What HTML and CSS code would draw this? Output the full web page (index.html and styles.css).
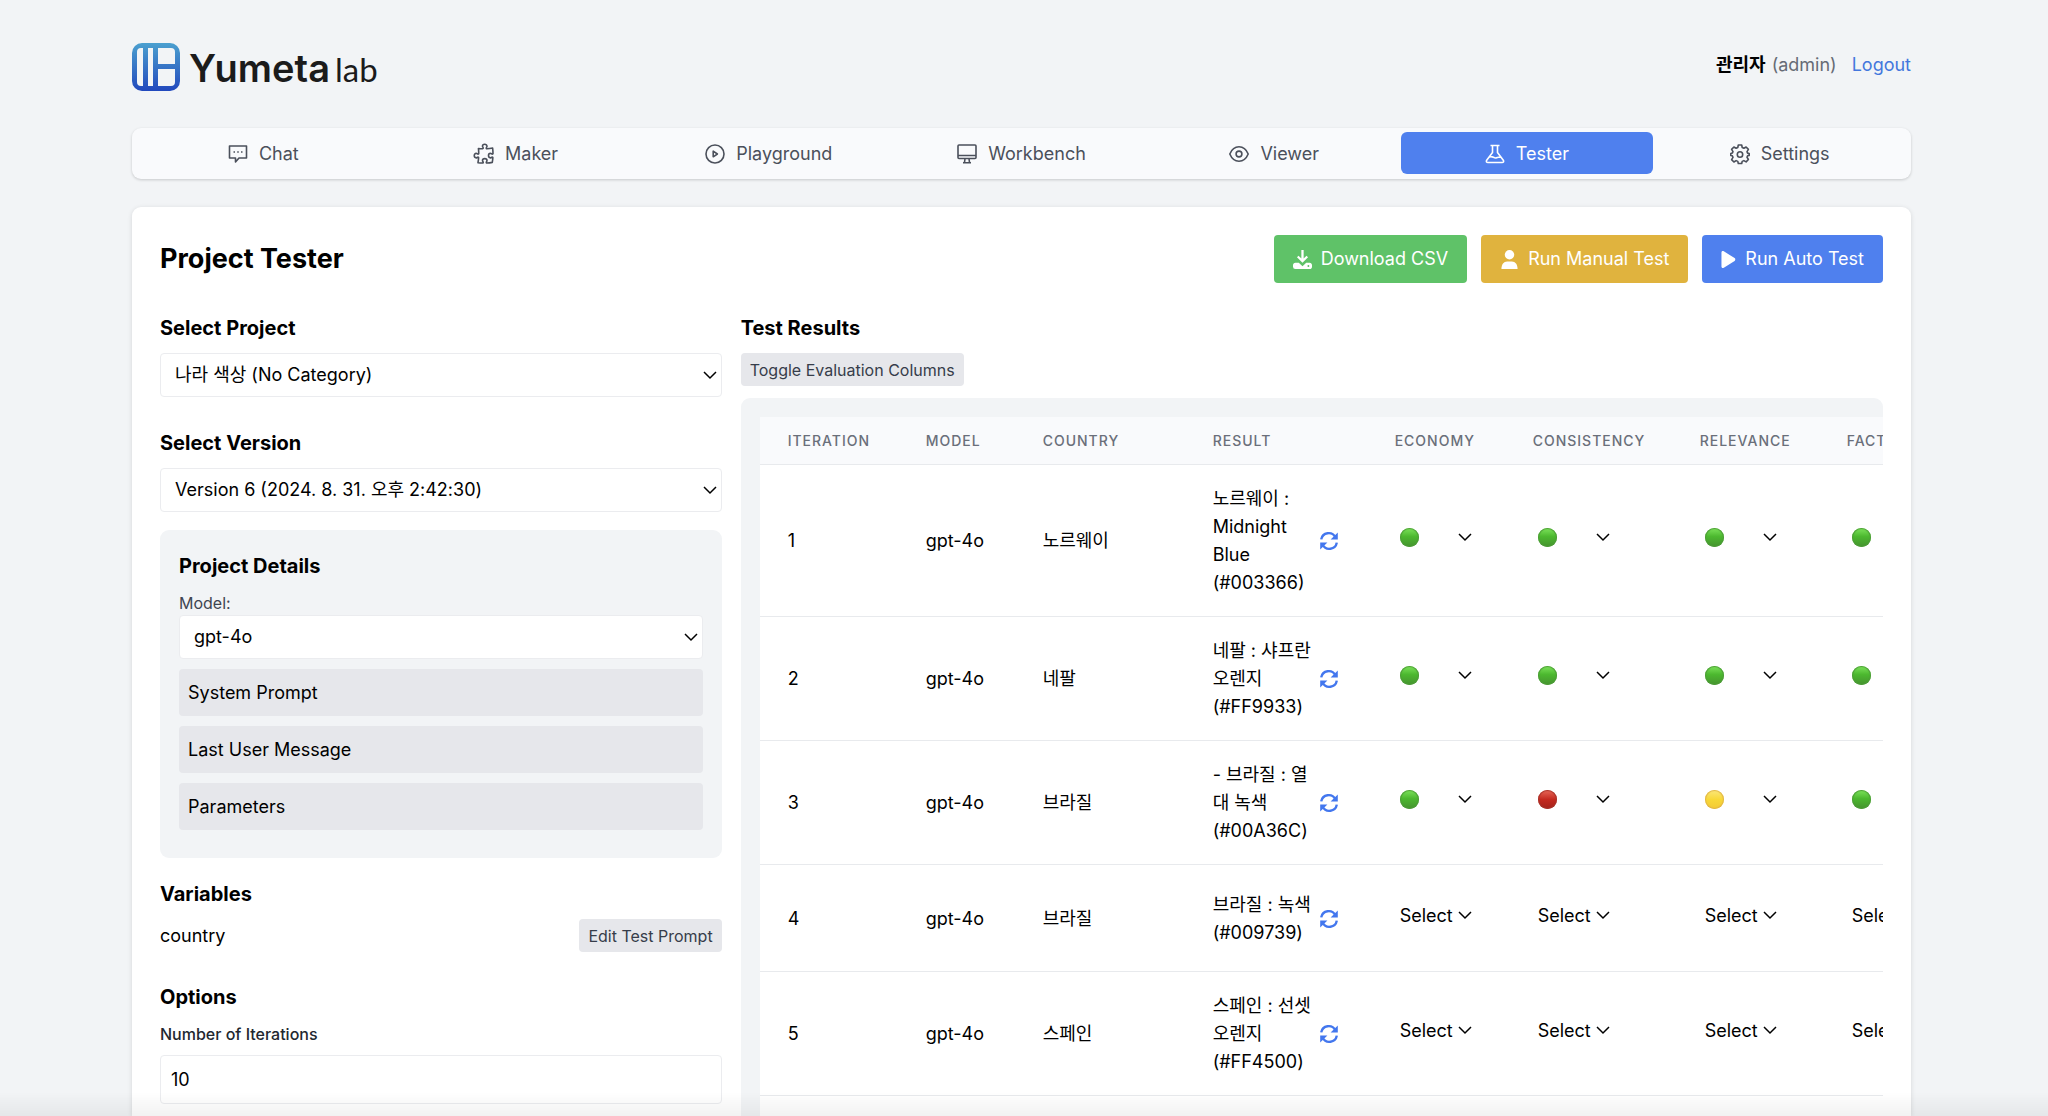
FILE: index.html
```html
<!DOCTYPE html>
<html lang="ko">
<head>
<meta charset="utf-8">
<title>Yumeta lab - Project Tester</title>
<link rel="stylesheet" href="styles.css">
</head>
<body>
<svg class="sprite" aria-hidden="true">
  <symbol id="chevron" viewBox="0 0 14 14"><path d="M1 4l6 6 6-6" fill="none" stroke="currentColor" stroke-width="1.5"/></symbol>
  <symbol id="refresh" viewBox="0 0 20 20"><g fill="none" stroke="currentColor" stroke-width="2.4"><path d="M2.2 8.4A7.6 7.6 0 0 1 16.4 6.2"/><path d="M17.8 11.6A7.6 7.6 0 0 1 3.6 13.8"/></g><path d="M18.8 1.4v7.2h-7.2zM1.2 18.6v-7.2h7.2z" fill="currentColor"/></symbol>
</svg>
<div class="app">
  <header class="header">
    <a class="logo" href="#" aria-label="Yumeta lab">
      <svg class="logo-mark" viewBox="0 0 48 48" aria-hidden="true">
        <defs><linearGradient id="brand" x1="0" y1="0" x2="0" y2="1"><stop offset="0" stop-color="#4ba0cf"/><stop offset="1" stop-color="#2148bd"/></linearGradient></defs>
        <path fill="url(#brand)" fill-rule="evenodd" d="M10 0h28a10 10 0 0 1 10 10v28a10 10 0 0 1-10 10H10A10 10 0 0 1 0 38V10A10 10 0 0 1 10 0zM9 5a4 4 0 0 0-4 4v30a4 4 0 0 0 4 4h2V5zM16 5v38h5V5zM26 5v16h17V9a4 4 0 0 0-4-4zM26 26v17h13a4 4 0 0 0 4-4V26z"/>
      </svg>
      <span class="logo-name">Yumeta</span><span class="logo-suffix">lab</span>
    </a>
    <div class="account"><strong>관리자</strong><span class="role">(admin)</span><a href="#">Logout</a></div>
  </header>

  <nav class="nav">
    <a href="#"><svg viewBox="0 0 20 20"><path d="M1.500 2h17v12H11l-3.500 4V14h-6z"/><path d="M5.500 8h1.500M9.250 8h1.500M13 8h1.500"/></svg>Chat</a>
    <a href="#"><svg viewBox="2 2 20 20"><path d="M14.250 6.087c0-.355.186-.676.401-.959.221-.290.349-.634.349-1.003 0-1.036-1.007-1.875-2.250-1.875s-2.250.840-2.250 1.875c0 .369.128.713.349 1.003.215.283.401.604.401.959a.640.640 0 0 1-.657.643 48 48 0 0 1-4.163-.300q.280 2.460.315 5a.656.656 0 0 1-.658.663c-.355 0-.676-.186-.959-.401a1.650 1.650 0 0 0-1.003-.349c-1.036 0-1.875 1.007-1.875 2.250s.840 2.250 1.875 2.250c.369 0 .713-.128 1.003-.349.283-.215.604-.401.959-.401.310 0 .555.260.532.570a48 48 0 0 1-.642 5.056c1.518.190 3.058.309 4.616.354a.640.640 0 0 0 .657-.643c0-.355-.186-.676-.401-.959a1.650 1.650 0 0 1-.349-1.003c0-1.035 1.008-1.875 2.250-1.875 1.243 0 2.250.840 2.250 1.875 0 .369-.128.713-.349 1.003-.215.283-.400.604-.400.959 0 .333.277.599.610.580a48 48 0 0 0 5.427-.630 48 48 0 0 0 .582-4.717.532.532 0 0 0-.533-.570c-.355 0-.676.186-.959.401-.290.221-.634.349-1.003.349-1.035 0-1.875-1.007-1.875-2.250s.840-2.250 1.875-2.250c.370 0 .713.128 1.003.349.283.215.604.401.960.401a.656.656 0 0 0 .658-.663 48 48 0 0 0-.370-5.360c-1.886.342-3.810.574-5.766.689a.578.578 0 0 1-.610-.580z"/></svg>Maker</a>
    <a href="#"><svg viewBox="0 0 20 20"><circle cx="10" cy="10" r="9"/><path d="M8.200 7.200v5.600l4.200-2.800z"/></svg>Playground</a>
    <a href="#"><svg viewBox="0 0 20 20"><rect x="1" y="1" width="18" height="13.500" rx="1"/><path d="M1 11.500h18M8 14.500l-.5 4M12 14.500l.5 4M6 18.800h8"/></svg>Workbench</a>
    <a href="#"><svg viewBox="0 0 20 20"><path d="M.8 10c2-4.800 5.300-7.200 9.200-7.200s7.200 2.400 9.200 7.200c-2 4.800-5.300 7.200-9.200 7.200S2.800 14.800.8 10z"/><circle cx="10" cy="10" r="2.900"/></svg>Viewer</a>
    <a href="#" class="active" aria-current="page"><svg viewBox="0 0 20 20"><path d="M5.500 1.500h9M7.500 1.500v7L1.700 16.200c-.8 1.200-.2 2.300 1.200 2.300h14.200c1.400 0 2-1.100 1.200-2.300L12.500 8.500v-7M4.500 13c3-1.500 4.500 1.800 7 .8 1.500-.6 2.500-.8 4-.8"/></svg>Tester</a>
    <a href="#"><svg viewBox="0 0 20 20"><path d="M8.300 1h3.400l.5 2.500 1.700.8 2.200-1.300 2.300 2.400-1.400 2.200.6 1.500 1.600.4v1.900l-1.600.4-.6 1.500 1.400 2.200-2.300 2.400-2.200-1.300-1.700.8-.5 2.100H8.300l-.5-2.100-1.700-.8L3.900 18l-2.300-2.400L3 13.400l-.7-1.600L.8 11.400V9.500l1.500-.4L3 7.600 1.600 5.400 3.900 3l2.200 1.300 1.700-.8z"/><circle cx="10" cy="10.500" r="2.700"/></svg>Settings</a>
  </nav>

  <main class="panel">
    <div class="title-row">
      <h1>Project Tester</h1>
      <div class="actions">
        <button class="action green" type="button"><svg viewBox="0 0 20 20"><path d="M8.800 0h2.400v9l3-3 1.600 1.600L10 13.500 4.200 7.600 5.800 6l3 3z"/><path fill-rule="evenodd" d="M2.500 13.500h3.600L10 17l3.900-3.500h3.600c1.400 0 2.500 1.100 2.500 2.500v1.500c0 1.400-1.100 2.500-2.500 2.500h-15A2.500 2.500 0 0 1 0 17.500V16c0-1.400 1.100-2.500 2.500-2.500zM16.200 15.800a1 1 0 1 0 0 2 1 1 0 0 0 0-2z"/></svg>Download CSV</button>
        <button class="action yellow" type="button"><svg viewBox="0 0 20 20"><circle cx="10" cy="5" r="5"/><path d="M1.500 20c0-5 2.500-8 6-8h5c3.500 0 6 3 6 8z"/></svg>Run Manual Test</button>
        <button class="action blue" type="button"><svg class="play" viewBox="0 0 16 20"><path d="M.5 2.500C.5 1 1.800.5 3 1.300l11.500 7.200c1 .7 1 2.300 0 3L3 18.700c-1.200.8-2.500.3-2.500-1.200z"/></svg>Run Auto Test</button>
      </div>
    </div>

    <div class="columns">
      <section class="setup">
        <div class="field">
          <h2><label for="project">Select Project</label></h2>
          <div class="select"><select id="project"><option>나라 색상 (No Category)</option></select><svg><use href="#chevron"/></svg></div>
        </div>
        <div class="field">
          <h2><label for="version">Select Version</label></h2>
          <div class="select"><select id="version"><option>Version 6 (2024. 8. 31. 오후 2:42:30)</option></select><svg><use href="#chevron"/></svg></div>
        </div>
        <div class="details">
          <h2>Project Details</h2>
          <label class="small" for="model">Model:</label>
          <div class="select"><select id="model"><option>gpt-4o</option></select><svg><use href="#chevron"/></svg></div>
          <button class="fold" type="button">System Prompt</button>
          <button class="fold" type="button">Last User Message</button>
          <button class="fold" type="button">Parameters</button>
        </div>
        <div class="variables">
          <h2>Variables</h2>
          <div class="variable"><span>country</span><button class="chip" type="button">Edit Test Prompt</button></div>
        </div>
        <div class="options">
          <h2>Options</h2>
          <label class="iterations-label" for="iterations">Number of Iterations</label>
          <input id="iterations" type="text" inputmode="numeric" value="10">
        </div>
      </section>

      <section class="results">
        <h2>Test Results</h2>
        <button class="chip" type="button">Toggle Evaluation Columns</button>
        <div class="table-box">
          <table>
            <colgroup><col class="c-iteration"><col class="c-model"><col class="c-country"><col class="c-result"><col class="c-economy"><col class="c-consistency"><col class="c-relevance"><col class="c-fact"></colgroup>
            <thead><tr><th>ITERATION</th><th>MODEL</th><th>COUNTRY</th><th>RESULT</th><th>ECONOMY</th><th>CONSISTENCY</th><th>RELEVANCE</th><th>FACT</th></tr></thead>
            <tbody>
              <tr>
                <td>1</td><td>gpt-4o</td><td>노르웨이</td>
                <td><div class="result"><p>노르웨이 :<br>Midnight<br>Blue<br>(#003366)</p><button type="button" aria-label="Run again"><svg><use href="#refresh"/></svg></button></div></td>
                <td class="rate"><div class="rating"><select aria-label="Economy"><option aria-label="Good"></option></select><i class="dot good"></i><svg><use href="#chevron"/></svg></div></td>
                <td class="rate"><div class="rating"><select aria-label="Consistency"><option aria-label="Good"></option></select><i class="dot good"></i><svg><use href="#chevron"/></svg></div></td>
                <td class="rate"><div class="rating"><select aria-label="Relevance"><option aria-label="Good"></option></select><i class="dot good"></i><svg><use href="#chevron"/></svg></div></td>
                <td class="rate"><div class="rating"><select aria-label="Fact"><option aria-label="Good"></option></select><i class="dot good"></i><svg><use href="#chevron"/></svg></div></td>
              </tr>
              <tr>
                <td>2</td><td>gpt-4o</td><td>네팔</td>
                <td><div class="result"><p>네팔 : 샤프란<br>오렌지<br>(#FF9933)</p><button type="button" aria-label="Run again"><svg><use href="#refresh"/></svg></button></div></td>
                <td class="rate"><div class="rating"><select aria-label="Economy"><option aria-label="Good"></option></select><i class="dot good"></i><svg><use href="#chevron"/></svg></div></td>
                <td class="rate"><div class="rating"><select aria-label="Consistency"><option aria-label="Good"></option></select><i class="dot good"></i><svg><use href="#chevron"/></svg></div></td>
                <td class="rate"><div class="rating"><select aria-label="Relevance"><option aria-label="Good"></option></select><i class="dot good"></i><svg><use href="#chevron"/></svg></div></td>
                <td class="rate"><div class="rating"><select aria-label="Fact"><option aria-label="Good"></option></select><i class="dot good"></i><svg><use href="#chevron"/></svg></div></td>
              </tr>
              <tr>
                <td>3</td><td>gpt-4o</td><td>브라질</td>
                <td><div class="result"><p>- 브라질 : 열<br>대 녹색<br>(#00A36C)</p><button type="button" aria-label="Run again"><svg><use href="#refresh"/></svg></button></div></td>
                <td class="rate"><div class="rating"><select aria-label="Economy"><option aria-label="Good"></option></select><i class="dot good"></i><svg><use href="#chevron"/></svg></div></td>
                <td class="rate"><div class="rating"><select aria-label="Consistency"><option aria-label="Bad"></option></select><i class="dot bad"></i><svg><use href="#chevron"/></svg></div></td>
                <td class="rate"><div class="rating"><select aria-label="Relevance"><option aria-label="Fair"></option></select><i class="dot fair"></i><svg><use href="#chevron"/></svg></div></td>
                <td class="rate"><div class="rating"><select aria-label="Fact"><option aria-label="Good"></option></select><i class="dot good"></i><svg><use href="#chevron"/></svg></div></td>
              </tr>
              <tr>
                <td>4</td><td>gpt-4o</td><td>브라질</td>
                <td><div class="result"><p>브라질 : 녹색<br>(#009739)</p><button type="button" aria-label="Run again"><svg><use href="#refresh"/></svg></button></div></td>
                <td class="rate"><div class="rating"><select aria-label="Economy"><option>Select</option></select><svg><use href="#chevron"/></svg></div></td>
                <td class="rate"><div class="rating"><select aria-label="Consistency"><option>Select</option></select><svg><use href="#chevron"/></svg></div></td>
                <td class="rate"><div class="rating"><select aria-label="Relevance"><option>Select</option></select><svg><use href="#chevron"/></svg></div></td>
                <td class="rate"><div class="rating"><select aria-label="Fact"><option>Select</option></select><svg><use href="#chevron"/></svg></div></td>
              </tr>
              <tr>
                <td>5</td><td>gpt-4o</td><td>스페인</td>
                <td><div class="result"><p>스페인 : 선셋<br>오렌지<br>(#FF4500)</p><button type="button" aria-label="Run again"><svg><use href="#refresh"/></svg></button></div></td>
                <td class="rate"><div class="rating"><select aria-label="Economy"><option>Select</option></select><svg><use href="#chevron"/></svg></div></td>
                <td class="rate"><div class="rating"><select aria-label="Consistency"><option>Select</option></select><svg><use href="#chevron"/></svg></div></td>
                <td class="rate"><div class="rating"><select aria-label="Relevance"><option>Select</option></select><svg><use href="#chevron"/></svg></div></td>
                <td class="rate"><div class="rating"><select aria-label="Fact"><option>Select</option></select><svg><use href="#chevron"/></svg></div></td>
              </tr>
            </tbody>
          </table>
          <div class="table-rest"></div>
        </div>
      </section>
    </div>
  </main>
</div>
<div class="fade"></div>
</body>
</html>
```
FILE: styles.css
```css
*, *::before, *::after { box-sizing: border-box; }

body {
  margin: 0;
  height: 100vh;
  overflow: hidden;
  background: #f2f4f6;
  color: #000;
  font: 18px/28px Inter, "Noto Sans CJK KR", sans-serif;
}

h1, h2, p { margin: 0; }
h1 { font-size: 27px; line-height: 40px; font-weight: 700; }
h2 { font-size: 20px; line-height: 28px; font-weight: 700; }
button, select, input { margin: 0; font: inherit; color: inherit; }
button { border: 0; cursor: pointer; }
a { color: #4377dd; text-decoration: none; }
svg { display: block; flex: none; }

.sprite { position: absolute; width: 0; height: 0; }

.app {
  min-height: 100vh;
  padding: 38px 137px 0 132px;
  display: flex;
  flex-direction: column;
}

.header {
  display: flex;
  justify-content: space-between;
  height: 90px;
}
.logo { display: flex; height: 57px; align-items: center; color: #1b1b1b; }
.logo-mark { width: 48px; height: 48px; margin-right: 9px; }
.logo-name { font: 600 38px/57px Inter, sans-serif; padding-top: 3px; }
.logo-suffix { font: 400 33px/57px Lato, sans-serif; margin-left: 5px; padding-top: 6px; }
.account { display: flex; height: 54px; align-items: center; }
.account strong { font-weight: 700; }
.role { color: #666b75; margin: 0 15px 0 6px; }

.nav {
  display: flex;
  padding: 4px 5px 5px;
  background: #f9fafc;
  border-radius: 9px;
  box-shadow: 0 1px 3px rgba(0, 0, 0, .18);
}
.nav a {
  flex: 1;
  display: flex;
  align-items: center;
  justify-content: center;
  gap: 11px;
  height: 42px;
  padding-top: 1px;
  border-radius: 6px;
  color: #4b505b;
}
.nav svg {
  width: 20px;
  height: 20px;
  fill: none;
  stroke: currentColor;
  stroke-width: 1.6;
  stroke-linejoin: round;
  overflow: visible;
}
.nav .active { background: #4f80ee; color: #fff; }

.panel {
  flex: 1;
  display: flex;
  flex-direction: column;
  margin-top: 28px;
  padding: 28px 28px 0;
  background: #fff;
  border-radius: 9px 9px 0 0;
  box-shadow: 0 1px 5px rgba(0, 0, 0, .12);
}
.title-row { display: flex; justify-content: space-between; align-items: center; }
.actions { display: flex; gap: 14px; }
.action {
  display: flex;
  align-items: center;
  gap: 9px;
  height: 48px;
  padding: 0 19px;
  border-radius: 4px;
  color: #fff;
}
.action svg { width: 19px; height: 19px; fill: currentColor; }
.action .play { width: 15px; }
.green { background: #5fc268; }
.yellow { background: #e0b33e; }
.blue { background: #4f80ee; }

.columns {
  flex: 1;
  display: grid;
  grid-template-columns: repeat(3, 1fr);
  gap: 19px;
  margin-top: 31px;
}
.setup, .results { min-width: 0; }

.field { margin-bottom: 18px; }
.field + .field { margin-top: 32px; }
.field h2, .results h2 { margin-bottom: 11px; }

.select { display: grid; align-items: center; }
.select > *, .rating > * { grid-area: 1 / 1; }
.select select {
  appearance: none;
  width: 100%;
  height: 44px;
  padding: 0 14px;
  border: 1px solid #ebecef;
  border-radius: 4px;
  background: #fff;
}
.select svg, .rating svg {
  width: 14px;
  height: 14px;
  justify-self: end;
  pointer-events: none;
}
.select svg { margin-right: 5px; }

.details {
  padding: 19px 19px 28px;
  background: #f2f4f6;
  border-radius: 9px;
}
.details h2 { padding-top: 3px; margin-bottom: 11px; }
.small { display: block; font-size: 16px; line-height: 24px; color: #3f4551; }
.fold {
  display: block;
  width: 100%;
  height: 47px;
  margin-top: 10px;
  padding: 0 9px;
  border-radius: 4px;
  background: #e6e7eb;
  text-align: left;
}

.variables { margin-top: 22px; }
.variable { display: flex; justify-content: space-between; align-items: center; margin-top: 11px; }
.chip {
  height: 33px;
  padding: 0 9px;
  border-radius: 4px;
  background: #e6e7eb;
  color: #363d4a;
  font-size: 16px;
  line-height: 24px;
}
.options { margin-top: 31px; }
.iterations-label { display: block; margin: 11px 0 9px; font-size: 16px; line-height: 24px; font-weight: 500; color: #22272f; }
.options input {
  display: block;
  width: 100%;
  height: 49px;
  padding: 0 10px;
  border: 1px solid #ebecef;
  border-radius: 4px;
  background: #fff;
}

.results { grid-column: span 2; display: flex; flex-direction: column; align-items: flex-start; }
.table-box {
  flex: 1;
  display: flex;
  flex-direction: column;
  width: 100%;
  margin-top: 12px;
  padding: 19px 0 0 19px;
  overflow: hidden;
  background: #f2f4f6;
  border-radius: 9px 9px 0 0;
}
.table-rest { flex: 1; background: #fff; }
table {
  flex: none;
  table-layout: fixed;
  width: 1205px;
  border-collapse: separate;
  border-spacing: 0;
  background: #fff;
}
.c-iteration { width: 138px; }
.c-model { width: 117px; }
.c-country { width: 170px; }
.c-result { width: 182px; }
.c-economy { width: 138px; }
.c-consistency { width: 167px; }
.c-relevance { width: 147px; }
.c-fact { width: 146px; }
th, td { padding: 20px 0 19px 28px; border-bottom: 1px solid #e8eaed; text-align: left; }
th {
  padding: 12px 0 11px 28px;
  background: #f9fafc;
  color: #6a6f7a;
  font-size: 14px;
  line-height: 24px;
  font-weight: 500;
  letter-spacing: 1px;
}
.result { display: flex; align-items: center; }
.result p { width: 106px; white-space: nowrap; }
.result button { padding: 0; background: none; color: #4377ee; }
.result svg { width: 20px; height: 20px; }
.rate { padding: 28px 0 35px 28px; }
.rating { display: grid; align-items: center; width: 77px; }
.rating select {
  appearance: none;
  width: 77px;
  height: 43px;
  padding: 2px 0 0 5px;
  border: 0;
  background: none;
}
.dot { width: 19px; height: 19px; margin-left: 5px; border-radius: 50%; pointer-events: none; }
.good { background: linear-gradient(#7ee45c, #4cb82f 45%, #45922f); box-shadow: inset 0 0 1px 1px #4d9c38; }
.bad { background: linear-gradient(#e8695a, #c4291f 50%, #a3221a); box-shadow: inset 0 0 1px 1px #a8342b; }
.fair { background: linear-gradient(#fbe77c, #f8d838 50%, #f3ca35); box-shadow: inset 0 0 1px 1px #e0b548; }

.fade {
  position: fixed;
  inset: auto 0 0;
  height: 24px;
  background: linear-gradient(transparent, rgba(0, 0, 0, .05));
  pointer-events: none;
}
```
